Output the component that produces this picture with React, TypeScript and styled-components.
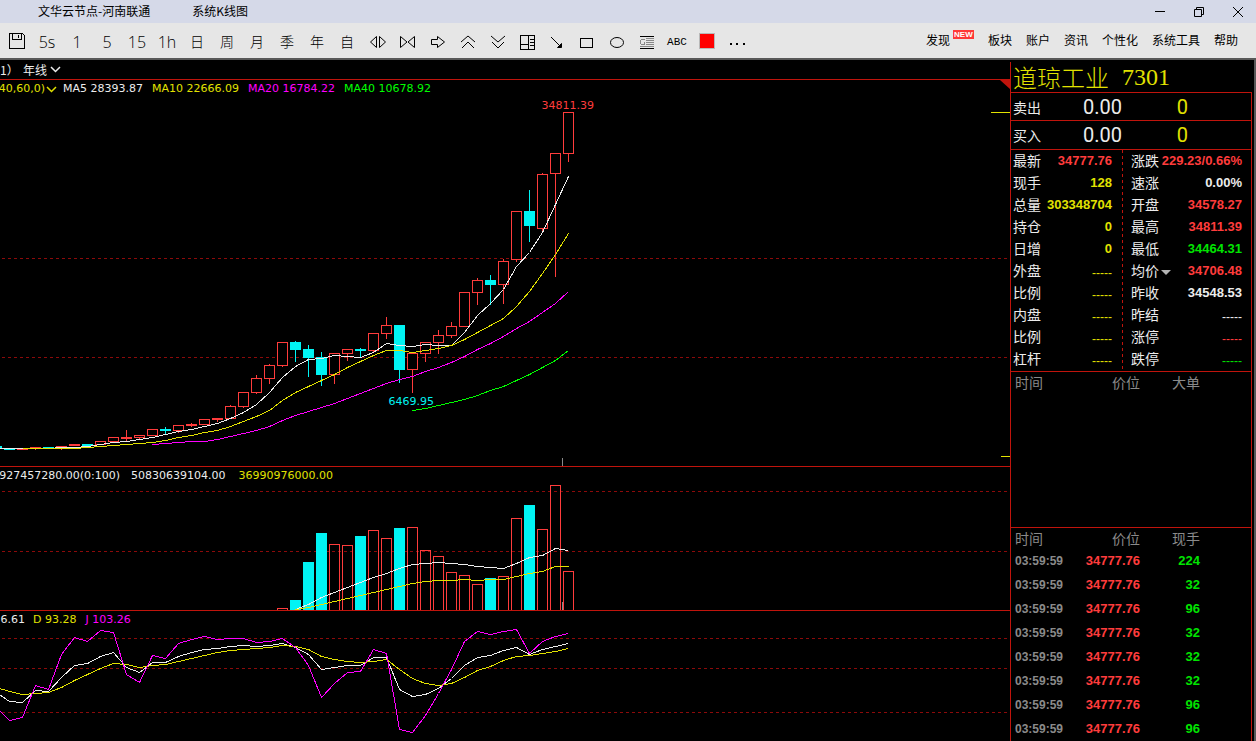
import React from "react";
import styled, { createGlobalStyle } from "styled-components";

const color = {
  line: "#c0140c",
  grid: "#8c0a0a",
  up: "#ff3c3c",
  down: "#00f4f4",
  white: "#ececec",
  yellow: "#e2e200",
  magenta: "#ff00ff",
  lime: "#00ff00",
  green: "#00e400",
  gray: "#8a8a8a",
  frame: "#585858",
};

const cjk = '"Noto Sans CJK SC", sans-serif';
const numeric = '"DejaVu Sans", "Noto Sans CJK SC", sans-serif';
const boldNumber = '"Liberation Sans", "Noto Sans CJK SC", sans-serif';

const GlobalStyle = createGlobalStyle`
  * { box-sizing: border-box; }
  body { margin: 0; background: #000; overflow: hidden; }
  button, select {
    appearance: none; border: 0; margin: 0; padding: 0;
    background: transparent; color: inherit; font: inherit;
  }
`;

/* ---------- frame ---------- */

const Window = styled.div`
  display: flex;
  flex-direction: column;
  height: 100vh;
  font: 12px/16px ${cjk};
  color: #000;
`;

const TitleBar = styled.header`
  display: flex;
  align-items: center;
  height: 23px;
  padding: 0 12px 2px 38px;
  background: #d5d9e8;
`;

const TitleText = styled.span`
  margin-right: 42px;
  white-space: nowrap;
`;

const WindowControls = styled.div`
  display: flex;
  gap: 27px;
  margin-left: auto;
  padding-top: 2px;
`;

const ControlButton = styled.button`
  display: flex;
  width: 12px;
  height: 12px;
`;

const Toolbar = styled.nav`
  display: flex;
  align-items: center;
  height: 35px;
  padding: 0 18px 0 2px;
  background: #e6e6e6;
`;

const ToolGroup = styled.div`
  display: flex;
  padding-top: 3px;
`;

const Tool = styled.button<{ $kind: "latin" | "cjk" | "icon" | "abc" }>`
  display: flex;
  align-items: center;
  justify-content: center;
  width: 30px;
  height: 24px;
  padding-bottom: ${(p) => (p.$kind === "cjk" ? 2 : 0)}px;
  font-family: ${(p) =>
    p.$kind === "latin" ? '"Open Sans", sans-serif' : p.$kind === "abc" ? '"Liberation Mono", monospace' : cjk};
  font-size: ${(p) => (p.$kind === "latin" ? 16 : p.$kind === "abc" ? 11 : 14)}px;
  font-weight: ${(p) => (p.$kind === "abc" ? 400 : 300)};
`;

const MenuGroup = styled.div`
  display: flex;
  gap: 14px;
  margin-left: auto;
  padding-bottom: 2px;
`;

const MenuButton = styled.button`
  display: flex;
  gap: 3px;
  white-space: nowrap;
`;

const NewBadge = styled.span`
  width: 21px;
  height: 9px;
  margin-top: -2px;
  background: #ff3838;
  color: #fff;
  font: bold 8px/9px "Liberation Sans", sans-serif;
  text-align: center;
`;

const Main = styled.main`
  display: flex;
  flex: 1;
  min-height: 0;
  border-top: 2px solid ${color.frame};
  border-right: 2px solid ${color.frame};
  background: #000;
  color: ${color.white};
`;

/* ---------- charts ---------- */

const Charts = styled.section`
  display: flex;
  flex-direction: column;
  flex: 1;
  min-width: 0;
`;

const PeriodBar = styled.div`
  display: flex;
  align-items: center;
  height: 19px;
  font-size: 12px;
`;

const PeriodCode = styled.span`
  width: 23px;
`;

const PeriodPicker = styled.label`
  display: flex;
  align-items: center;
  gap: 2px;

  select { width: 25px; height: 18px; }
`;

const Pane = styled.div<{ $grow?: boolean }>`
  position: relative;
  display: flex;
  flex-direction: column;
  flex: ${(p) => (p.$grow ? "1 0 0" : "none")};
  min-height: 0;
  border-top: 1px solid ${color.line};
`;

const Legend = styled.div`
  display: flex;
  align-items: center;
  height: 16px;
  padding-top: 2px;
  font: 11px/14px ${numeric};
  white-space: nowrap;
`;

const LegendLead = styled.span<{ $width: number; $gap?: number; $tone: string }>`
  display: flex;
  justify-content: flex-end;
  flex: none;
  width: ${(p) => p.$width}px;
  margin-right: ${(p) => p.$gap ?? 0}px;
  overflow: hidden;
  color: ${(p) => p.$tone};
`;

const LegendToggle = styled.button`
  display: flex;
  margin: 0 6px 0 1px;
  color: ${color.yellow};
`;

const LegendItem = styled.span<{ $tone: string; $gap?: number }>`
  margin-right: ${(p) => p.$gap ?? 9}px;
  color: ${(p) => p.$tone};
`;

const Plot = styled.svg<{ $height?: number }>`
  display: block;
  width: 100%;
  ${(p) => (p.$height ? `height: ${p.$height}px;` : "flex: 1; min-height: 0;")}
  overflow: hidden;
  font: 11px ${numeric};
`;

const Corner = styled.svg`
  position: absolute;
  top: 0;
  right: 0;
`;

/* ---------- quote panel ---------- */

const QuotePanel = styled.aside`
  display: flex;
  flex-direction: column;
  flex: none;
  width: 244px;
  padding-right: 2px;
  margin-top: 2px;
  border-left: 1px solid ${color.line};
`;

const Instrument = styled.h1`
  display: flex;
  gap: 13px;
  align-items: center;
  height: 30px;
  margin: 0;
  padding-left: 2px;
  color: ${color.yellow};
  font: 300 24px/30px ${cjk};
`;

const InstrumentCode = styled.span`
  font-family: "Liberation Serif", serif;
`;

const QuoteBox = styled.div`
  flex: 1;
  min-height: 0;
  border-right: 1px solid ${color.line};
`;

const PriceRow = styled.div<{ $height: number }>`
  display: grid;
  grid-template-columns: 28px 81px 66px;
  align-items: center;
  height: ${(p) => p.$height}px;
  padding-left: 2px;
  border-top: 1px solid ${color.line};
  font-size: 14px;
`;

const BigNumber = styled.span<{ $tone: string }>`
  color: ${(p) => p.$tone};
  font: 20px/24px Roboto, sans-serif;
  text-align: right;
`;

const QuoteGrid = styled.div`
  display: grid;
  grid-template-columns: 111px 1px minmax(0, 1fr);
  height: 222px;
  border-top: 1px solid ${color.line};
`;

const QuoteDivider = styled.div`
  height: 219px;
  background: repeating-linear-gradient(${color.line} 0 3px, transparent 3px 6px);
`;

const QuoteList = styled.dl<{ $side: "left" | "right" }>`
  margin: 0;
  padding: ${(p) => (p.$side === "left" ? "0 10px 0 2px" : "0 9px 0 8px")};
`;

const QuoteRow = styled.div`
  display: flex;
  align-items: center;
  justify-content: space-between;
  height: 22px;
`;

const QuoteLabel = styled.dt`
  display: flex;
  align-items: center;
  padding-bottom: 2px;
  font-size: 14px;
  white-space: nowrap;
`;

const LabelToggle = styled.button`
  display: flex;
  align-items: center;
  gap: 2px;

  svg { margin-top: 4px; }
`;

const QuoteValue = styled.dd<{ $tone: string; $blank: boolean }>`
  margin: 0;
  padding-top: ${(p) => (p.$blank ? 3 : 0)}px;
  color: ${(p) => p.$tone};
  font: ${(p) => (p.$blank ? '12px/16px "Liberation Sans", sans-serif' : `bold 13px/18px ${boldNumber}`)};
`;

const Ticks = styled.section<{ $height?: number }>`
  height: ${(p) => (p.$height ? `${p.$height}px` : "auto")};
  border-top: 1px solid ${color.line};
`;

const TickTable = styled.table`
  width: 189px;
  table-layout: fixed;
  border-collapse: collapse;
  color: ${color.gray};

  th {
    height: 21px;
    padding: 0;
    font: 14px/21px ${cjk};
    text-align: right;
  }
  th:first-child { width: 69px; padding-left: 4px; text-align: left; }
  th:last-child { width: 60px; }
  td {
    height: 24px;
    padding: 0;
    font: bold 13px/24px ${boldNumber};
    text-align: right;
  }
  td:first-child { padding-left: 4px; font-size: 12px; text-align: left; }
  td:nth-child(2) { color: ${color.up}; }
  td:last-child { color: ${color.green}; }
`;

/* ---------- icons ---------- */

const iconPaths: Record<string, React.ReactNode> = {
  save: <path d="M4.5 3.5h13l2 2v13h-15z M7.5 3.5v6h9v-6 M13.5 5v3" />,
  spread: <path d="M11.5 6.5v11L5.5 12z M14.5 6.5v11L20.5 12z" />,
  squeeze: <path d="M5.5 6.5v11L12 12z M19.5 6.5v11L13 12z" />,
  right: <path d="M6.5 9.5h6v-3l7 5.5-7 5.5v-3h-6z" />,
  up: <path d="M6 12l7-6 7 6 M7 18l6-6 6 6" />,
  down: <path d="M6 6l7 6 7-6 M7 12l6 6 6-6" />,
  layout: <path d="M5.5 5.5h14v14h-14z M13.5 5.5v14 M5.5 14.5h8 M15 9.5h4 M15 12.5h4 M15 15.5h4" />,
  trend: (
    <>
      <path d="M6 7l9 9" />
      <path d="M12.5 17.5h4v-4z" fill="#000" />
    </>
  ),
  rect: <path d="M5.5 8.5h12v9h-12z" />,
  ellipse: <ellipse cx="12" cy="12.5" rx="6.5" ry="5" />,
  text: (
    <>
      <path d="M5 6.5h14 M5 18.5h14" />
      <path
        d="M11 8.5h8 M11 10.5h8 M11 12.5h8 M11 14.5h8 M5 16.5h14 M9.5 9.5h-3l-1 1v3l1 1h3v-2h-1"
        stroke="#888"
      />
    </>
  ),
  color: <rect x="4.5" y="3.5" width="15" height="15" fill="#f00" stroke="#b8b8b8" />,
  more: <path d="M5 13h2v2H5z M11 13h2v2h-2z M18 13h2v2h-2z" fill="#000" stroke="none" />,
};

const Icon = ({ name }: { name: string }) => (
  <svg
    width="24"
    height="24"
    viewBox="0 0 24 24"
    fill="none"
    stroke="#000"
    shapeRendering={/save|layout|rect|text|color|more/.test(name) ? "crispEdges" : "auto"}
    aria-hidden="true"
  >
    {iconPaths[name]}
  </svg>
);

const Chevron = () => (
  <svg width="11" height="7" viewBox="0 0 11 7" fill="none" stroke="currentColor" strokeWidth="1.5" aria-hidden="true">
    <path d="M1 1l4.5 4.5L10 1" />
  </svg>
);

/* ---------- data ---------- */

const tools: [string, "latin" | "cjk" | "icon" | "abc", string][] = [
  ["save", "icon", "保存"],
  ["5s", "latin", ""],
  ["1", "latin", ""],
  ["5", "latin", ""],
  ["15", "latin", ""],
  ["1h", "latin", ""],
  ["日", "cjk", ""],
  ["周", "cjk", ""],
  ["月", "cjk", ""],
  ["季", "cjk", ""],
  ["年", "cjk", ""],
  ["自", "cjk", ""],
  ["spread", "icon", "放大"],
  ["squeeze", "icon", "缩小"],
  ["right", "icon", "右移"],
  ["up", "icon", "向上"],
  ["down", "icon", "向下"],
  ["layout", "icon", "布局"],
  ["trend", "icon", "趋势线"],
  ["rect", "icon", "矩形"],
  ["ellipse", "icon", "椭圆"],
  ["text", "icon", "文本框"],
  ["ABC", "abc", ""],
  ["color", "icon", "颜色"],
  ["more", "icon", "更多"],
];

const menus = ["发现", "板块", "账户", "资讯", "个性化", "系统工具", "帮助"];

// [body top, body bottom, wick top, wick bottom, falling], from the newest bar back
const candles: [number, number, number, number, number][] = [
  [112, 153, 112, 161, 0], [153, 173, 153, 276, 0], [174, 228, 172, 232, 0], [211, 225, 189, 241, 1],
  [211, 259, 210, 261, 0], [261, 284, 258, 303, 0], [280, 284, 274, 304, 1], [280, 292, 277, 304, 0],
  [292, 326, 292, 326, 0], [326, 335, 321, 337, 0], [335, 342, 329, 353, 0], [342, 353, 341, 361, 0],
  [353, 369, 352, 392, 0], [325, 369, 325, 382, 1], [325, 333, 316, 338, 0], [333, 350, 332, 351, 0],
  [349, 350, 347, 357, 1], [349, 353, 349, 360, 0], [353, 374, 353, 383, 0], [357, 374, 351, 385, 1],
  [349, 357, 344, 376, 1], [342, 349, 340, 361, 1], [342, 365, 342, 366, 0], [365, 378, 363, 383, 0],
  [378, 392, 374, 393, 0], [392, 406, 391, 407, 0], [406, 418, 404, 418, 0], [418, 419, 417, 421, 0],
  [419, 424, 419, 424, 0], [424, 425, 422, 426, 0], [425, 430, 425, 432, 0], [429, 430, 426, 433, 1],
  [429, 435, 429, 435, 0], [435, 437, 435, 439, 0], [437, 438, 429, 440, 0], [437, 441, 437, 441, 0],
  [441, 444, 441, 444, 0], [444, 445, 443, 445, 1], [444, 445, 443, 445, 0], [446, 447, 446, 449, 0],
  [447, 447, 446, 448, 1], [447, 447, 446, 449, 0], [448, 449, 448, 449, 0], [448, 449, 448, 449, 1],
  [446, 448, 446, 448, 1],
];

const volumes: [number, number][] = [
  [571, 0], [485, 0], [529, 0], [505, 1], [518, 0], [576, 0], [578, 1], [584, 0], [575, 0], [572, 0], [556, 0],
  [550, 0], [527, 0], [528, 1], [538, 0], [530, 0], [536, 1], [545, 0], [544, 0], [533, 1], [562, 1], [600, 1],
  [608, 0],
];

const LAST_X = 568;
const STEP = 13;

// Line through one value per bar; the last value sits on the newest bar.
const series = (ys: number[]) => ys.map((y, i) => `${LAST_X - STEP * (ys.length - 1 - i)},${y}`).join(" ");

const ma5 = [
  448, 448, 448, 448, 448, 447, 447, 446, 444, 442, 441, 439, 437, 434, 431, 429, 426, 423, 418, 412, 404, 392, 377,
  366, 359, 358, 355, 356, 357, 352, 343, 345, 346, 344, 345, 345, 332, 315, 303, 289, 266, 252, 232, 204, 176,
];
const ma10 = [
  448, 448, 448, 448, 448, 447, 446, 445, 444, 443, 442, 440, 437, 435, 432, 430, 426, 421, 416, 410, 400, 392, 386,
  380, 374, 367, 361, 355, 350, 350, 352, 350, 348, 345, 339, 332, 325, 318, 306, 291, 273, 254, 233,
];
const ma20 = [
  444, 443, 442, 441, 441, 439, 436, 433, 430, 426, 420, 415, 411, 407, 403, 398, 393, 388, 383, 379, 376, 371, 367,
  362, 356, 349, 343, 336, 328, 321, 312, 303, 291,
];
const ma40 = [410, 408, 405, 402, 399, 395, 390, 386, 380, 374, 367, 360, 350];

const volFast = [
  609, 604, 597, 592, 587, 582, 577, 573, 568, 564, 563, 562, 563, 564, 566, 567, 568, 563, 557, 555, 548, 550,
];
const volSlow = [
  609, 607, 604, 601, 598, 595, 592, 589, 586, 583, 581, 580, 580, 579, 580, 579, 579, 576, 573, 571, 566, 566,
];

const kLine = [
  692, 701, 702, 690, 691, 677, 665, 663, 656, 652, 667, 672, 662, 662, 656, 652, 649, 648, 646, 645, 646, 645, 643,
  647, 654, 669, 667, 665, 665, 657, 657, 689, 696, 694, 688, 678, 665, 657, 655, 650, 647, 654, 649, 646, 643,
];
const dLine = [
  687, 691, 694, 693, 692, 687, 680, 674, 668, 663, 664, 667, 665, 664, 661, 658, 655, 652, 650, 649, 648, 647, 645,
  646, 649, 656, 659, 661, 662, 661, 659, 669, 678, 683, 685, 683, 677, 670, 666, 660, 656, 655, 653, 651, 648,
];
const jLine = [
  707, 720, 717, 685, 689, 654, 637, 641, 630, 632, 674, 682, 655, 658, 643, 639, 636, 639, 638, 638, 642, 641, 638,
  647, 665, 697, 683, 672, 671, 649, 653, 729, 732, 715, 693, 669, 641, 631, 634, 631, 629, 653, 641, 636, 633,
];

const leftQuotes: [string, string, string][] = [
  ["最新", "34777.76", color.up],
  ["现手", "128", color.yellow],
  ["总量", "303348704", color.yellow],
  ["持仓", "0", color.yellow],
  ["日增", "0", color.yellow],
  ["外盘", "-----", color.yellow],
  ["比例", "-----", color.yellow],
  ["内盘", "-----", color.yellow],
  ["比例", "-----", color.yellow],
  ["杠杆", "-----", color.yellow],
];

const rightQuotes: [string, string, string][] = [
  ["涨跌", "229.23/0.66%", color.up],
  ["速涨", "0.00%", color.white],
  ["开盘", "34578.27", color.up],
  ["最高", "34811.39", color.up],
  ["最低", "34464.31", color.green],
  ["均价", "34706.48", color.up],
  ["昨收", "34548.53", color.white],
  ["昨结", "-----", color.white],
  ["涨停", "-----", color.up],
  ["跌停", "-----", color.green],
];

const ticks = [224, 32, 96, 32, 32, 32, 96, 96];

/* ---------- parts ---------- */

const GridLine = ({ y }: { y: number }) => (
  <line x1="1" x2="100%" y1={y} y2={y} stroke={color.grid} strokeDasharray="3 3" />
);

const Line = ({ ys, tone }: { ys: number[]; tone: string }) => (
  <polyline points={series(ys)} fill="none" stroke={tone} />
);

const Candles = () => (
  <>
    {candles.map(([top, bottom, high, low, falling], i) => {
      const x = LAST_X - STEP * i;
      const tone = falling ? color.down : color.up;
      return (
        <g key={x} stroke={tone}>
          {high < top && <line x1={x} x2={x} y1={high} y2={top} />}
          {low > bottom && <line x1={x} x2={x} y1={bottom} y2={low} />}
          <rect x={x - 5} y={top} width={10} height={bottom - top || 0.1} fill={falling ? tone : "#000"} />
        </g>
      );
    })}
  </>
);

const Volumes = () => (
  <>
    {volumes.map(([top, falling], i) => {
      const x = LAST_X - STEP * i - 5;
      const tone = falling ? color.down : color.up;
      return <rect key={x} x={x} y={top} width={10} height={612 - top} stroke={tone} fill={falling ? tone : "none"} />;
    })}
  </>
);

const Quotes = ({ side, rows }: { side: "left" | "right"; rows: [string, string, string][] }) => (
  <QuoteList $side={side}>
    {rows.map(([label, value, tone], i) => (
      <QuoteRow key={i}>
        <QuoteLabel>
          {label === "均价" ? (
            <LabelToggle>
              {label}
              <svg width="10" height="5" viewBox="0 0 10 5" aria-hidden="true">
                <path d="M0 0h10L5 5z" fill="#b4b4b4" />
              </svg>
            </LabelToggle>
          ) : (
            label
          )}
        </QuoteLabel>
        <QuoteValue $tone={tone} $blank={value[0] === "-"}>
          {value}
        </QuoteValue>
      </QuoteRow>
    ))}
  </QuoteList>
);

const TickHead = ({ last }: { last: string }) => (
  <thead>
    <tr>
      <th scope="col">时间</th>
      <th scope="col">价位</th>
      <th scope="col">{last}</th>
    </tr>
  </thead>
);

export default function App() {
  return (
    <Window>
      <GlobalStyle />
      <TitleBar>
        <TitleText>文华云节点-河南联通</TitleText>
        <TitleText>系统K线图</TitleText>
        <WindowControls>
          <ControlButton aria-label="最小化">
            <svg width="12" height="12" stroke="#000" fill="none">
              <path d="M1 5.5h10" />
            </svg>
          </ControlButton>
          <ControlButton aria-label="还原">
            <svg width="12" height="12" stroke="#000" fill="none">
              <path d="M1.5 3.5h7v7h-7z M3.5 3.5v-2h7v7h-2" />
            </svg>
          </ControlButton>
          <ControlButton aria-label="关闭">
            <svg width="12" height="12" stroke="#000" fill="none">
              <path d="M1 1l10 10M11 1L1 11" />
            </svg>
          </ControlButton>
        </WindowControls>
      </TitleBar>

      <Toolbar>
        <ToolGroup>
          {tools.map(([name, kind, label]) => (
            <Tool key={name} $kind={kind} aria-label={label || name}>
              {kind === "icon" ? <Icon name={name} /> : name}
            </Tool>
          ))}
        </ToolGroup>
        <MenuGroup>
          {menus.map((name) => (
            <MenuButton key={name}>
              {name}
              {name === "发现" && <NewBadge>NEW</NewBadge>}
            </MenuButton>
          ))}
        </MenuGroup>
      </Toolbar>

      <Main>
        <Charts>
          <PeriodBar>
            <PeriodCode>1）</PeriodCode>
            <PeriodPicker>
              <select aria-label="周期" defaultValue="年线">
                <option>年线</option>
              </select>
              <Chevron />
            </PeriodPicker>
          </PeriodBar>

          <Pane>
            <Legend>
              <LegendLead $width={45} $tone={color.yellow}>
                40,60,0)
              </LegendLead>
              <LegendToggle aria-label="均线参数">
                <Chevron />
              </LegendToggle>
              <LegendItem $tone={color.white}>MA5 28393.87</LegendItem>
              <LegendItem $tone={color.yellow}>MA10 22666.09</LegendItem>
              <LegendItem $tone={color.magenta}>MA20 16784.22</LegendItem>
              <LegendItem $tone={color.lime}>MA40 10678.92</LegendItem>
            </Legend>
            <Plot $height={370} role="img" aria-label="年线K线">
              <g transform="translate(0.5 -95.5)" shapeRendering="crispEdges">
                <GridLine y={258} />
                <GridLine y={357} />
                <Candles />
                <Line ys={ma5} tone={color.white} />
                <Line ys={ma10} tone={color.yellow} />
                <Line ys={ma20} tone={color.magenta} />
                <Line ys={ma40} tone={color.lime} />
                <line x1="562" x2="562" y1="457" y2="466" stroke={color.gray} />
                <text x="541" y="108" fill={color.up}>34811.39</text>
                <text x="388" y="404" fill={color.down}>6469.95</text>
              </g>
              <svg x="100%" overflow="visible" stroke={color.yellow} shapeRendering="crispEdges">
                <path d="M-19 16.5H0 M-9 360.5H0" />
              </svg>
            </Plot>
            <Corner width="10" height="9" aria-hidden="true">
              <path d="M0 0h10v9z" fill={color.line} />
            </Corner>
          </Pane>

          <Pane>
            <Legend>
              <LegendLead $width={120} $gap={11} $tone={color.white}>
                927457280.00(0:100)
              </LegendLead>
              <LegendItem $tone={color.white} $gap={13}>50830639104.00</LegendItem>
              <LegendItem $tone={color.yellow}>36990976000.00</LegendItem>
            </Legend>
            <Plot $height={127} role="img" aria-label="成交量">
              <g transform="translate(0.5 -482.5)" shapeRendering="crispEdges">
                <GridLine y={491} />
                <GridLine y={551} />
                <Volumes />
                <Line ys={volFast} tone={color.white} />
                <Line ys={volSlow} tone={color.yellow} />
                <line x1="562" x2="562" y1="601" y2="611" stroke={color.gray} />
              </g>
            </Plot>
          </Pane>

          <Pane $grow>
            <Legend>
              <LegendLead $width={25} $gap={8} $tone={color.white}>
                6.61
              </LegendLead>
              <LegendItem $tone={color.yellow}>D 93.28</LegendItem>
              <LegendItem $tone={color.magenta}>J 103.26</LegendItem>
            </Legend>
            <Plot role="img" aria-label="KDJ">
              <g transform="translate(0.5 -626.5)" shapeRendering="crispEdges">
                <GridLine y={638} />
                <GridLine y={668} />
                <GridLine y={712} />
                <Line ys={kLine} tone={color.white} />
                <Line ys={dLine} tone={color.yellow} />
                <Line ys={jLine} tone={color.magenta} />
              </g>
            </Plot>
          </Pane>
        </Charts>

        <QuotePanel>
          <Instrument>
            道琼工业<InstrumentCode>7301</InstrumentCode>
          </Instrument>
          <QuoteBox>
            <PriceRow $height={28}>
              卖出
              <BigNumber $tone={color.white}>0.00</BigNumber>
              <BigNumber $tone={color.yellow}>0</BigNumber>
            </PriceRow>
            <PriceRow $height={29}>
              买入
              <BigNumber $tone={color.white}>0.00</BigNumber>
              <BigNumber $tone={color.yellow}>0</BigNumber>
            </PriceRow>
            <QuoteGrid>
              <Quotes side="left" rows={leftQuotes} />
              <QuoteDivider />
              <Quotes side="right" rows={rightQuotes} />
            </QuoteGrid>
            <Ticks $height={156}>
              <TickTable>
                <TickHead last="大单" />
              </TickTable>
            </Ticks>
            <Ticks>
              <TickTable>
                <TickHead last="现手" />
                <tbody>
                  {ticks.map((qty, i) => (
                    <tr key={i}>
                      <td>03:59:59</td>
                      <td>34777.76</td>
                      <td>{qty}</td>
                    </tr>
                  ))}
                </tbody>
              </TickTable>
            </Ticks>
          </QuoteBox>
        </QuotePanel>
      </Main>
    </Window>
  );
}
